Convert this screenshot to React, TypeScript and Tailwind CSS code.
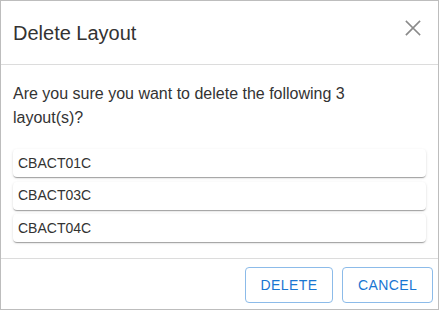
import React from "react";

const items = ["CBACT01C", "CBACT03C", "CBACT04C"];

export default function App() {
  return (
    <div
      className="w-[439px] h-[310px] bg-white border border-[#bdbdbd] flex flex-col text-[#333333]"
      style={{ fontFamily: '"Liberation Sans", Arial, sans-serif' }}
    >
      <div className="h-[64px] shrink-0 flex items-center justify-between pl-[12px] pr-[17px] border-b border-[#dcdcdc]">
        <div className="text-[20px] leading-none text-[#333333] pt-[1px]">Delete Layout</div>
        <svg width="16" height="16" viewBox="0 0 16 16" className="self-start mt-[19px]">
          <path d="M1.5 1.5 L14.5 14.5 M14.5 1.5 L1.5 14.5" stroke="#8a8a8a" strokeWidth="1.7" strokeLinecap="square" fill="none" />
        </svg>
      </div>
      <div className="h-[194px] shrink-0 px-[12px] pt-[17px] border-b border-[#dcdcdc]">
        <p className="text-[16px] leading-[24px] pr-[70px]">
          Are you sure you want to delete the following 3 layout(s)?
        </p>
        <div className="mt-[19px] flex flex-col gap-[4.5px]">
          {items.map((it) => (
            <div
              key={it}
              className="h-[28px] flex items-center pl-[5px] rounded-[4px] bg-white text-[14px] text-[#333333] shadow-[0px_2px_1px_-1px_rgba(0,0,0,0.2),0px_1px_1px_0px_rgba(0,0,0,0.14),0px_1px_3px_0px_rgba(0,0,0,0.12)]"
            >
              {it}
            </div>
          ))}
        </div>
      </div>
      <div className="flex-1 flex items-start justify-end gap-[9px] pt-[8px] pr-[5px]">
        <button className="h-[36px] w-[88px] rounded-[4px] border border-[#8cbbe9] text-[#1976d2] text-[14px] tracking-[0.4px] uppercase flex items-center justify-center">
          Delete
        </button>
        <button className="h-[36px] w-[91px] rounded-[4px] border border-[#8cbbe9] text-[#1976d2] text-[14px] tracking-[0.4px] uppercase flex items-center justify-center">
          Cancel
        </button>
      </div>
    </div>
  );
}
